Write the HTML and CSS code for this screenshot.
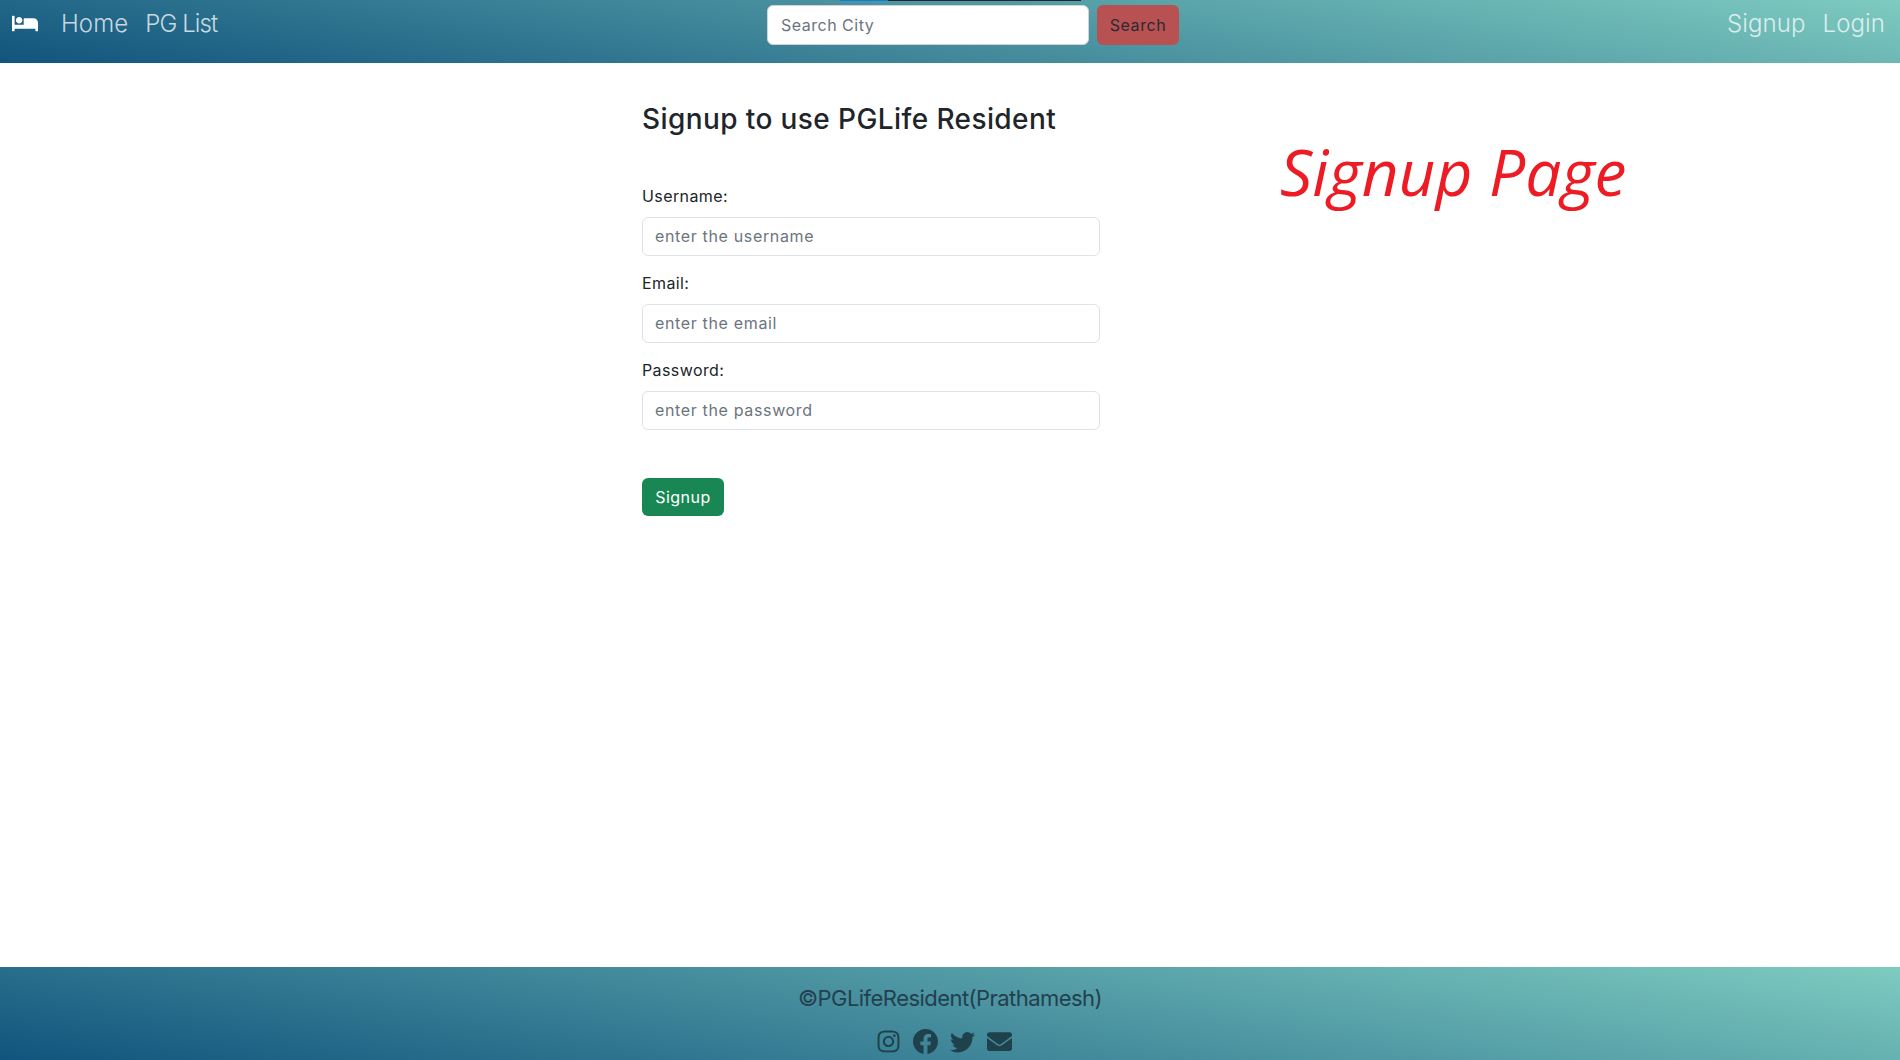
FILE: index.html
```html
<!DOCTYPE html>
<html lang="en">
<head>
    <meta charset="UTF-8">
    <meta name="viewport" content="width=device-width, initial-scale=1.0">
    <title>Signup - PGLife Resident</title>
    <link rel="stylesheet" href="styles.css">
</head>
<body>
    <div class="top-line"><span class="top-line-blue"></span><span class="top-line-dark"></span></div>
    <header class="navbar">
        <nav class="nav-left">
            <a href="#" class="brand">
                <svg class="brand-icon" viewBox="0 0 640 512" fill="currentColor"><path d="M176 256c44.11 0 80-35.89 80-80s-35.89-80-80-80-80 35.89-80 80 35.89 80 80 80zm352-128H304c-8.84 0-16 7.16-16 16v144H64V80c0-8.84-7.16-16-16-16H16C7.16 64 0 71.16 0 80v352c0 8.84 7.16 16 16 16h32c8.84 0 16-7.16 16-16v-48h512v48c0 8.84 7.16 16 16 16h32c8.84 0 16-7.16 16-16V240c0-61.86-50.14-112-112-112z"/></svg>
            </a>
            <a href="#" class="nav-link">Home</a>
            <a href="#" class="nav-link nav-link-tight">PG List</a>
        </nav>
        <form class="search-form">
            <input type="text" class="search-input" placeholder="Search City">
            <button type="button" class="search-btn">Search</button>
        </form>
        <nav class="nav-right">
            <a href="#" class="nav-link">Signup</a>
            <a href="#" class="nav-link">Login</a>
        </nav>
    </header>

    <main class="content">
        <form class="signup-form">
            <h1 class="form-title">Signup to use PGLife Resident</h1>
            <div class="form-group">
                <label for="username">Username:</label>
                <input type="text" id="username" placeholder="enter the username">
            </div>
            <div class="form-group">
                <label for="email">Email:</label>
                <input type="email" id="email" placeholder="enter the email">
            </div>
            <div class="form-group">
                <label for="password">Password:</label>
                <input type="password" id="password" placeholder="enter the password">
            </div>
            <button type="submit" class="signup-btn">Signup</button>
        </form>
        <h2 class="page-name">Signup Page</h2>
    </main>

    <footer class="footer">
        <p class="copyright">©PGLifeResident(Prathamesh)</p>
        <div class="socials">
            <svg class="social-icon" viewBox="0 0 448 512" fill="currentColor"><path d="M224.1 141c-63.6 0-114.9 51.3-114.9 114.9s51.3 114.9 114.9 114.9S339 319.5 339 255.9 287.7 141 224.1 141zm0 189.6c-41.1 0-74.7-33.5-74.7-74.7s33.5-74.7 74.7-74.7 74.7 33.5 74.7 74.7-33.6 74.7-74.7 74.7zm146.4-194.3c0 14.9-12 26.8-26.8 26.8-14.9 0-26.8-12-26.8-26.8s12-26.8 26.8-26.8 26.8 12 26.8 26.8zm76.1 27.2c-1.7-35.9-9.9-67.7-36.2-93.9-26.2-26.2-58-34.4-93.9-36.2-37-2.1-147.9-2.1-184.9 0-35.8 1.7-67.6 9.9-93.9 36.1s-34.4 58-36.2 93.9c-2.1 37-2.1 147.9 0 184.9 1.7 35.9 9.9 67.7 36.2 93.9s58 34.4 93.9 36.2c37 2.1 147.9 2.1 184.9 0 35.9-1.7 67.7-9.9 93.9-36.2 26.2-26.2 34.4-58 36.2-93.9 2.1-37 2.1-147.8 0-184.8zM398.8 388c-7.8 19.6-22.9 34.7-42.6 42.6-29.5 11.7-99.5 9-132.1 9s-102.7 2.6-132.1-9c-19.6-7.8-34.7-22.9-42.6-42.6-11.7-29.5-9-99.5-9-132.1s-2.6-102.7 9-132.1c7.8-19.6 22.9-34.7 42.6-42.6 29.5-11.7 99.5-9 132.1-9s102.7-2.6 132.1 9c19.6 7.8 34.7 22.9 42.6 42.6 11.7 29.5 9 99.5 9 132.1s2.7 102.7-9 132.1z"/></svg>
            <svg class="social-icon" viewBox="0 0 16 16" fill="currentColor"><path d="M16 8.049c0-4.446-3.582-8.05-8-8.05C3.58 0-.002 3.603-.002 8.05c0 4.017 2.926 7.347 6.75 7.951v-5.625h-2.03V8.05H6.75V6.275c0-2.017 1.195-3.131 3.022-3.131.876 0 1.791.157 1.791.157v1.98h-1.009c-.993 0-1.303.621-1.303 1.258v1.51h2.218l-.354 2.326H9.25V16c3.824-.604 6.75-3.934 6.75-7.951z"/></svg>
            <svg class="social-icon" viewBox="0 0 16 16" fill="currentColor"><path d="M5.026 15c6.038 0 9.341-5.003 9.341-9.334 0-.14 0-.282-.006-.422A6.685 6.685 0 0 0 16 3.542a6.658 6.658 0 0 1-1.889.518 3.301 3.301 0 0 0 1.447-1.817 6.533 6.533 0 0 1-2.087.793A3.286 3.286 0 0 0 7.875 6.03a9.325 9.325 0 0 1-6.767-3.429 3.289 3.289 0 0 0 1.018 4.382A3.323 3.323 0 0 1 .64 6.575v.045a3.288 3.288 0 0 0 2.632 3.218 3.203 3.203 0 0 1-.865.115 3.23 3.23 0 0 1-.614-.057 3.283 3.283 0 0 0 3.067 2.277A6.588 6.588 0 0 1 .78 13.58a6.32 6.32 0 0 1-.78-.045A9.344 9.344 0 0 0 5.026 15z"/></svg>
            <svg class="social-icon" viewBox="0 0 512 512" fill="currentColor"><path d="M502.3 190.8c3.9-3.1 9.7-.2 9.7 4.7V400c0 26.5-21.5 48-48 48H48c-26.5 0-48-21.5-48-48V195.6c0-5 5.7-7.8 9.7-4.7 22.4 17.4 52.1 39.5 154.1 113.6 21.1 15.4 56.7 47.8 92.2 47.6 35.7.3 72-32.8 92.3-47.6 102-74.1 131.6-96.3 154-113.7zM256 320c23.2.4 56.6-29.2 73.4-41.4 132.7-96.3 142.8-104.7 173.4-128.7 5.8-4.5 9.2-11.5 9.2-18.9v-19c0-26.5-21.5-48-48-48H48C21.5 64 0 85.5 0 112v19c0 7.4 3.4 14.3 9.2 18.9 30.6 23.9 40.7 32.4 173.4 128.7 16.8 12.2 50.2 41.8 73.4 41.4z"/></svg>
        </div>
    </footer>
</body>
</html>
```

FILE: styles.css
```css
* {
    box-sizing: border-box;
}
body {
    font-family: Inter, "Liberation Sans", sans-serif;
    margin: 0;
    height: 1060px;
    display: flex;
    flex-direction: column;
    color: #212529;
    background-color: #fff;
    overflow: hidden;
}
a {
    text-decoration: none;
}
.top-line {
    display: flex;
    height: 1px;
    margin-bottom: -1px;
    padding-left: 840px;
    position: relative;
}
.top-line-blue {
    width: 48px;
    background-color: #0d7fd8;
}
.top-line-dark {
    width: 193px;
    background-color: #23272b;
}
.navbar {
    height: 63px;
    flex-shrink: 0;
    display: flex;
    justify-content: space-between;
    align-items: flex-start;
    padding: 5px 15px 0 12px;
    background: linear-gradient(10deg, #11547d, #7ecbc0);
}
.nav-left, .nav-right {
    display: flex;
    align-items: center;
    gap: 17px;
    height: 36px;
}
.nav-left {
    width: 755px;
}
.brand {
    display: flex;
    color: #fff;
    margin-right: 6px;
}
.brand-icon {
    width: 26px;
    height: 21px;
}
.nav-link {
    font-size: 24px;
    font-weight: 300;
    color: rgba(255, 255, 255, 0.75);
    letter-spacing: 0.1px;
}
.nav-link-tight {
    letter-spacing: -0.9px;
}
.search-form {
    display: flex;
    gap: 8px;
    margin-right: auto;
}
.search-input {
    width: 322px;
    height: 40px;
    padding: 6px 13px;
    font: 16px Inter, "Liberation Sans", sans-serif;
    letter-spacing: 0.5px;
    border: 1px solid #ced4da;
    border-radius: 6px;
}
.search-input::placeholder, .form-group input::placeholder {
    color: #6c757d;
    opacity: 1;
}
.search-btn {
    width: 82px;
    height: 40px;
    font: 16px Inter, "Liberation Sans", sans-serif;
    letter-spacing: 0.6px;
    color: #2a2a33;
    background-color: #b85152;
    border: none;
    border-radius: 6px;
}
.content {
    flex: 1;
    display: flex;
    align-items: flex-start;
    padding-left: 642px;
}
.signup-form {
    width: 458px;
}
.form-title {
    font-size: 28px;
    font-weight: 500;
    line-height: 34px;
    letter-spacing: 0.4px;
    margin: 39px 0 48px;
}
.form-group {
    margin-bottom: 15px;
}
.form-group label {
    display: block;
    font-size: 16px;
    line-height: 24px;
    letter-spacing: 0.4px;
    margin-bottom: 9px;
}
.form-group input {
    display: block;
    width: 100%;
    height: 39px;
    padding: 5px 12px 7px;
    font: 16px Inter, "Liberation Sans", sans-serif;
    letter-spacing: 0.65px;
    border: 1px solid #dee2e6;
    border-radius: 6px;
}
.signup-btn {
    display: block;
    width: 82px;
    height: 38px;
    margin-top: 48px;
    padding-bottom: 2px;
    font: 16px Inter, "Liberation Sans", sans-serif;
    letter-spacing: 0.5px;
    color: #fff;
    background-color: #198754;
    border: none;
    border-radius: 6px;
}
.page-name {
    margin: 65px 0 0 180px;
    font-family: "Open Sans", sans-serif;
    font-size: 64px;
    font-style: italic;
    font-weight: 400;
    line-height: 88px;
    color: #ed1c24;
    white-space: nowrap;
}
.footer {
    height: 93px;
    flex-shrink: 0;
    text-align: center;
    color: #23404e;
    background: linear-gradient(10deg, #11547d, #7ecbc0);
}
.copyright {
    margin: 0;
    padding-top: 15px;
    font-size: 22px;
    line-height: 33px;
    letter-spacing: -0.55px;
}
.socials {
    display: flex;
    justify-content: center;
    align-items: center;
    gap: 12px;
    margin-top: 14px;
    padding-right: 12px;
    color: #1f414b;
}
.social-icon {
    width: 25px;
    height: 25px;
}
```
